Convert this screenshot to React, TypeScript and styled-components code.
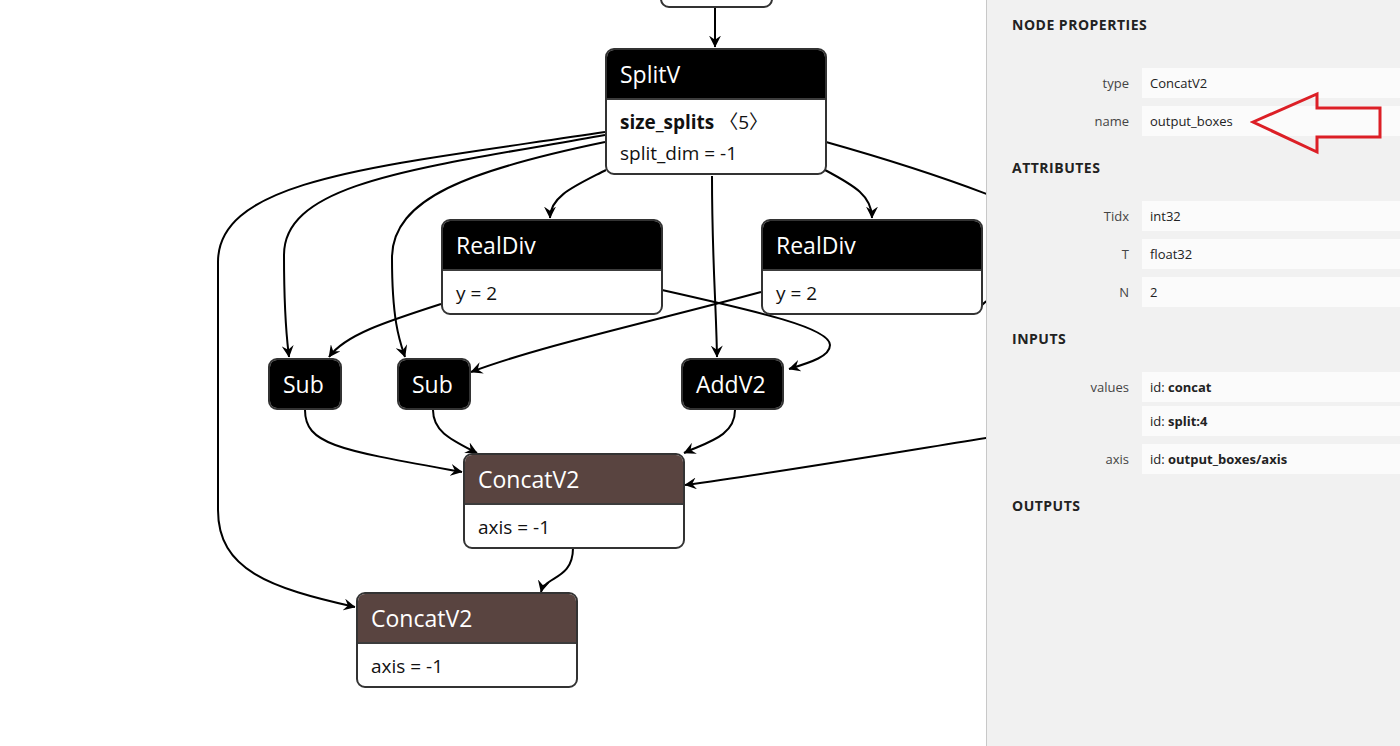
import React from 'react'
import styled, { createGlobalStyle } from 'styled-components'

const GlobalStyle = createGlobalStyle`
    html, body {
        margin: 0;
        padding: 0;
    }
    body {
        font-family: "Open Sans", "Noto Sans", "Noto Sans CJK SC", sans-serif;
        background: #ffffff;
    }
`

const Page = styled.div`
    position: relative;
    display: flex;
    width: 1400px;
    height: 746px;
    overflow: hidden;
`
const Canvas = styled.div`
    position: relative;
    flex: 1;
    background: #ffffff;
    overflow: hidden;
`
const EdgeLayer = styled.svg`
    position: absolute;
    left: 0;
    top: 0;
`
const NodeBox = styled.div<{ $x: number; $y: number; $w?: number }>`
    position: absolute;
    left: ${(p) => p.$x}px;
    top: ${(p) => p.$y}px;
    width: ${(p) => (p.$w ? `${p.$w}px` : 'auto')};
    box-sizing: border-box;
    border: 2px solid #333333;
    border-radius: 9px;
    overflow: hidden;
    background: #ffffff;
    font-family: "Open Sans", "Noto Sans", "Noto Sans CJK SC", sans-serif;
`
const NodeHeader = styled.div<{ $tone: 'op' | 'tensor'; $divided: boolean }>`
    display: flex;
    align-items: center;
    height: 48px;
    padding: 0 16px 0 13px;
    background: ${(p) => (p.$tone === 'tensor' ? '#594440' : '#000000')};
    border-bottom: ${(p) => (p.$divided ? '2px solid #3c3c3c' : 'none')};
    color: #ffffff;
    font-size: 23px;
    white-space: nowrap;
`
const NodeBody = styled.div`
    padding: 7px 13px 4px;
    font-size: 19px;
    line-height: 31px;
    color: #111111;
    white-space: nowrap;
`
const Strong = styled.span`
    font-weight: 700;
`
const Stub = styled.div`
    height: 62px;
`

const Sidebar = styled.aside`
    flex: none;
    width: 414px;
    box-sizing: border-box;
    padding: 15px 0 0 25px;
    border-left: 1px solid #c8c8c8;
    background: #f1f1f1;
    color: #222222;
    font-size: 13px;
`
const PanelTitle = styled.div`
    margin-bottom: 33px;
    font-size: 14px;
    font-weight: 700;
    letter-spacing: 0.5px;
    line-height: 20px;
`
const SectionTitle = styled.div`
    margin: 22px 0 23px;
    font-size: 14px;
    font-weight: 700;
    letter-spacing: 0.5px;
    line-height: 20px;
`
const Rows = styled.div`
    display: flex;
    flex-direction: column;
    gap: 8px;
`
const Row = styled.div`
    display: grid;
    grid-template-columns: 117px 1fr;
    column-gap: 13px;
`
const Label = styled.div`
    text-align: right;
    line-height: 30px;
    color: #444444;
`
const Values = styled.div`
    display: flex;
    flex-direction: column;
    gap: 4px;
`
const ValueBox = styled.div`
    height: 30px;
    padding: 0 8px;
    line-height: 30px;
    background: #fbfbfb;
    color: #222222;
`
const Callout = styled.svg`
    position: absolute;
    left: 1250px;
    top: 90px;
`

type Node = {
    x: number
    y: number
    w?: number
    title: string
    tone?: 'op' | 'tensor'
    body?: React.ReactNode[]
}

const nodes: Node[] = [
    { x: 605, y: 48, w: 222, title: 'SplitV', body: [<><Strong>size_splits</Strong> 〈5〉</>, 'split_dim = -1'] },
    { x: 441, y: 219, w: 222, title: 'RealDiv', body: ['y = 2'] },
    { x: 761, y: 219, w: 222, title: 'RealDiv', body: ['y = 2'] },
    { x: 268, y: 358, title: 'Sub' },
    { x: 397, y: 358, title: 'Sub' },
    { x: 681, y: 358, title: 'AddV2' },
    { x: 463, y: 453, w: 222, title: 'ConcatV2', tone: 'tensor', body: ['axis = -1'] },
    { x: 356, y: 592, w: 222, title: 'ConcatV2', tone: 'tensor', body: ['axis = -1'] },
]

// edges drawn without an arrowhead leave the visible canvas
const openEnds = [7, 12]

const edges: string[] = [
    'M715,4 L715,47',
    'M606,170 C575,186 550,196 550,218',
    'M825,170 C855,186 872,196 872,218',
    'M712,176 C712,260 716,300 717,357',
    'M605,135 C420,168 284,182 284,255 C284,320 287,340 289,357',
    'M605,142 C470,170 392,198 392,258 C392,322 400,342 405,357',
    'M605,132 C380,166 218,178 218,262 L218,510 C218,570 270,588 355,607',
    'M826,142 C890,160 940,176 992,196',
    'M992,437 C880,455 780,472 685,485',
    'M441,304 C385,322 345,335 329,357',
    'M662,290 C760,312 830,328 830,345 C830,356 812,362 789,369',
    'M761,292 C650,322 540,346 471,372',
    'M982,305 C985,302 987,300 992,298',
    'M305,410 C305,445 340,450 462,472',
    'M433,410 C433,432 452,440 477,453',
    'M735,410 C735,436 708,442 684,453',
    'M573,548 C573,580 545,576 541,592',
]

function GraphNode({ node }: { node: Node }) {
    const hasBody = !!node.body
    return (
        <NodeBox $x={node.x} $y={node.y} $w={node.w}>
            <NodeHeader $tone={node.tone ?? 'op'} $divided={hasBody}>
                {node.title}
            </NodeHeader>
            {node.body && (
                <NodeBody>
                    {node.body.map((line, i) => (
                        <div key={i}>{line}</div>
                    ))}
                </NodeBody>
            )}
        </NodeBox>
    )
}

function Property({ name, values }: { name: string; values: React.ReactNode[] }) {
    return (
        <Row>
            <Label>{name}</Label>
            <Values>
                {values.map((v, i) => (
                    <ValueBox key={i}>{v}</ValueBox>
                ))}
            </Values>
        </Row>
    )
}

const Id = ({ name }: { name: string }) => (
    <>
        id: <Strong>{name}</Strong>
    </>
)

export default function App() {
    return (
        <>
            <GlobalStyle />
            <Page>
                <Canvas>
                    <EdgeLayer width={986} height={746}>
                        <defs>
                            <marker
                                id="arrow"
                                viewBox="0 0 10 10"
                                refX="9.5"
                                refY="5"
                                markerUnits="userSpaceOnUse"
                                markerWidth="12"
                                markerHeight="12"
                                orient="auto"
                            >
                                <path d="M0,0 L10,5 L0,10 L3.5,5 z" fill="#000" />
                            </marker>
                        </defs>
                        {edges.map((d, i) => (
                            <path
                                key={i}
                                d={d}
                                fill="none"
                                stroke="#000"
                                strokeWidth={2}
                                markerEnd={openEnds.includes(i) ? undefined : 'url(#arrow)'}
                            />
                        ))}
                    </EdgeLayer>
                    <NodeBox $x={660} $y={-58} $w={113}>
                        <Stub />
                    </NodeBox>
                    {nodes.map((n, i) => (
                        <GraphNode key={i} node={n} />
                    ))}
                </Canvas>
                <Sidebar>
                    <PanelTitle>NODE PROPERTIES</PanelTitle>
                    <Rows>
                        <Property name="type" values={['ConcatV2']} />
                        <Property name="name" values={['output_boxes']} />
                    </Rows>
                    <SectionTitle>ATTRIBUTES</SectionTitle>
                    <Rows>
                        <Property name="Tidx" values={['int32']} />
                        <Property name="T" values={['float32']} />
                        <Property name="N" values={['2']} />
                    </Rows>
                    <SectionTitle>INPUTS</SectionTitle>
                    <Rows>
                        <Property name="values" values={[<Id name="concat" />, <Id name="split:4" />]} />
                        <Property name="axis" values={[<Id name="output_boxes/axis" />]} />
                    </Rows>
                    <SectionTitle>OUTPUTS</SectionTitle>
                </Sidebar>
                <Callout width={140} height={70} viewBox="0 0 140 70">
                    <path
                        d="M3,32 L67,4 L67,18 L130,18 L130,47 L67,47 L67,62 Z"
                        fill="none"
                        stroke="#dc1f26"
                        strokeWidth={3}
                        strokeLinejoin="miter"
                    />
                </Callout>
            </Page>
        </>
    )
}
